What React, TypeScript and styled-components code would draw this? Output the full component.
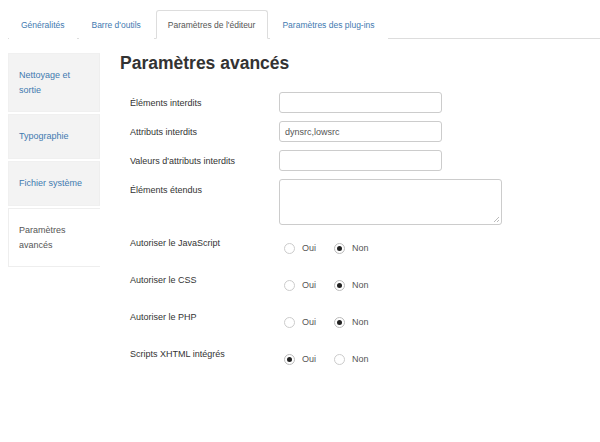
import React from "react";
import styled, { createGlobalStyle } from "styled-components";

const Global = createGlobalStyle`
  html, body { margin: 0; padding: 0; background: #fff; }
  body { font-family: "Liberation Sans", Arial, sans-serif; color: #333; }
  * { box-sizing: border-box; }
`;

const Page = styled.div`
  width: 600px;
  height: 442px;
  padding: 10px 0 0 8px;
`;

const TabBar = styled.ul`
  display: flex;
  list-style: none;
  margin: 0;
  padding: 0 0 0 1px;
  border-bottom: 1px solid #ddd;
  height: 29px;
`;

const Tab = styled.li<{ $active?: boolean }>`
  height: 29px;
  margin-right: 2px;
  padding: 0 12px 0 11px;
  display: flex;
  align-items: center;
  font-size: 8.5px;
  color: ${(p) => (p.$active ? "#555" : "#3f7ab0")};
  background: #fff;
  border: 1px solid ${(p) => (p.$active ? "#ddd" : "transparent")};
  border-bottom-color: ${(p) => (p.$active ? "#fff" : "transparent")};
  border-radius: 3px 3px 0 0;
  white-space: nowrap;
`;

const Body = styled.div`
  display: flex;
  margin-top: 14px;
`;

const Nav = styled.ul`
  list-style: none;
  margin: 0;
  padding: 0;
  width: 92px;
  flex: none;
`;

const NavItem = styled.li<{ $active?: boolean; $h: number }>`
  height: ${(p) => p.$h}px;
  margin-bottom: 2px;
  padding: 0 10px;
  display: flex;
  align-items: center;
  font-size: 9px;
  line-height: 15px;
  color: ${(p) => (p.$active ? "#555" : "#3f7ab0")};
  background: ${(p) => (p.$active ? "#fff" : "#f3f3f3")};
  border: 1px solid ${(p) => (p.$active ? "#eee" : "#f0f0f0")};
  border-right: ${(p) => (p.$active ? "none" : "1px solid #eee")};
`;

const Content = styled.div`
  flex: 1;
  padding-left: 20px;
`;

const Heading = styled.h2`
  margin: 0;
  font-size: 17.5px;
  font-weight: bold;
  color: #333;
  line-height: 20px;
`;

const Form = styled.div`
  display: grid;
  grid-template-columns: 149px auto;
  row-gap: 8px;
  margin-top: 19px;
  padding-left: 10px;
`;

const Label = styled.div<{ $pad?: number }>`
  font-size: 9px;
  line-height: 16px;
  color: #333;
  padding-top: ${(p) => p.$pad ?? 3}px;
`;

const Input = styled.div<{ $w?: number; $h?: number }>`
  width: ${(p) => p.$w ?? 163}px;
  height: ${(p) => p.$h ?? 21}px;
  border: 1px solid #ccc;
  border-radius: 3px;
  font-size: 9px;
  color: #555;
  padding: 0 5px;
  display: flex;
  align-items: ${(p) => (p.$h ? "flex-start" : "center")};
  position: relative;
`;

const Grip = styled.svg`
  position: absolute;
  right: 1px;
  bottom: 1px;
`;

const RadioGroup = styled.div`
  display: flex;
  align-items: center;
  height: 16px;
  margin-top: 7px;
  margin-bottom: 6px;
`;

const RadioOpt = styled.label`
  display: flex;
  align-items: center;
  font-size: 9px;
  color: #555;
  margin-right: 13px;
`;

const Circle = styled.span<{ $on?: boolean }>`
  width: 11px;
  height: 11px;
  border-radius: 50%;
  border: 1px solid ${(p) => (p.$on ? "#bbb" : "#ccc")};
  margin: 0 7px 0 5px;
  display: flex;
  align-items: center;
  justify-content: center;
  &::after {
    content: "";
    width: 5px;
    height: 5px;
    border-radius: 50%;
    background: ${(p) => (p.$on ? "#222" : "transparent")};
  }
`;

const tabs = ["Généralités", "Barre d'outils", "Paramètres de l'éditeur", "Paramètres des plug-ins"];
const nav: [string, number][] = [
  ["Nettoyage et sortie", 59],
  ["Typographie", 45],
  ["Fichier système", 45],
  ["Paramètres avancés", 59],
];
const radios: [string, boolean][] = [
  ["Autoriser le JavaScript", false],
  ["Autoriser le CSS", false],
  ["Autoriser le PHP", false],
  ["Scripts XHTML intégrés", true],
];

export default function App() {
  return (
    <Page>
      <Global />
      <TabBar>
        {tabs.map((t, i) => (
          <Tab key={t} $active={i === 2}>{t}</Tab>
        ))}
      </TabBar>
      <Body>
        <Nav>
          {nav.map(([t, h], i) => (
            <NavItem key={t} $h={h} $active={i === 3}>{t}</NavItem>
          ))}
        </Nav>
        <Content>
          <Heading>Paramètres avancés</Heading>
          <Form>
            <Label>Éléments interdits</Label>
            <Input />
            <Label>Attributs interdits</Label>
            <Input>dynsrc,lowsrc</Input>
            <Label>Valeurs d'attributs interdits</Label>
            <Input />
            <Label>Éléments étendus</Label>
            <Input $w={223} $h={46}>
              <Grip width="7" height="7" viewBox="0 0 7 7">
                <path d="M6 1 L1 6 M6 4 L4 6" stroke="#aaa" strokeWidth="0.8" />
              </Grip>
            </Input>
            {radios.map(([l, oui]) => (
              <React.Fragment key={l}>
                <Label $pad={2}>{l}</Label>
                <RadioGroup>
                  <RadioOpt><Circle $on={oui} />Oui</RadioOpt>
                  <RadioOpt><Circle $on={!oui} />Non</RadioOpt>
                </RadioGroup>
              </React.Fragment>
            ))}
          </Form>
        </Content>
      </Body>
    </Page>
  );
}
